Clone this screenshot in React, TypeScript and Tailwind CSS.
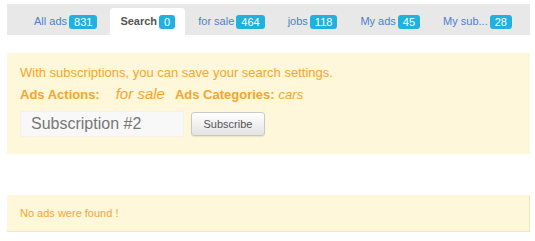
import React, { useState } from 'react';

const tabs = [
    { label: 'All ads', count: 831 },
    { label: 'Search', count: 0, active: true },
    { label: 'for sale', count: 464 },
    { label: 'jobs', count: 118 },
    { label: 'My ads', count: 45 },
    { label: 'My sub...', count: 28 },
];

export default function App() {
    const [name, setName] = useState('Subscription #2');

    return (
        <div className="w-[535px] h-[241px] bg-white pl-[7px] pt-[4px] font-['Liberation_Sans',Arial,sans-serif]">
            <div className="w-[523px]">
                {/* tabs */}
                <ul className="flex items-end h-[31px] bg-[#e8e8e8] pl-[17px] pt-[4px] overflow-hidden">
                    {tabs.map(t => (
                        <li key={t.label} className={`flex shrink-0 whitespace-nowrap items-center h-[27px] px-[10px] mr-[3px] rounded-t-[4px] text-[11px] ${t.active ? 'bg-white text-[#555] font-bold' : 'text-[#4b7fcf]'}`}>
                            <span>{t.label}</span>
                            <span className="ml-[2px] h-[14px] leading-[14px] px-[5px] rounded-[3px] bg-[#21b1df] text-white text-[11px] font-normal">{t.count}</span>
                        </li>
                    ))}
                </ul>

                {/* subscription box */}
                <div className="mt-[18px] h-[101px] bg-[#fef7d9] pl-[13px] pt-[10px] text-[#f7a52a]">
                    <p className="text-[13px] leading-[20px]">With subscriptions, you can save your search settings.</p>
                    <p className="text-[13px] leading-[20px] mt-[1px] flex items-baseline">
                        <b>Ads Actions:</b>
                        <i className="ml-[16px] text-[15px]">for sale</i>
                        <b className="ml-[10px]">Ads Categories:</b>
                        <i className="ml-[4px]">cars</i>
                    </p>
                    <div className="flex items-center gap-[7px] mt-[6px]">
                        <input
                            className="w-[164px] h-[26px] bg-[#f8f8f8] border border-[#f3f1ea] px-[10px] text-[16px] text-[#777] outline-none"
                            value={name}
                            onChange={e => setName(e.target.value)}
                        />
                        <button className="w-[74px] h-[24px] rounded-[3px] border border-[#c8c8c8] bg-gradient-to-b from-white to-[#e4e4e4] text-[11px] text-[#555] shadow-[0_1px_1px_rgba(0,0,0,0.08)]">Subscribe</button>
                    </div>
                </div>

                {/* results */}
                <div className="mt-[41px] h-[37px] bg-[#fef7d9] border-r border-b border-[#f8e4b7] pl-[13px] flex items-center text-[11px] text-[#f7a52a]">
                    No ads were found !
                </div>
            </div>
        </div>
    );
}
